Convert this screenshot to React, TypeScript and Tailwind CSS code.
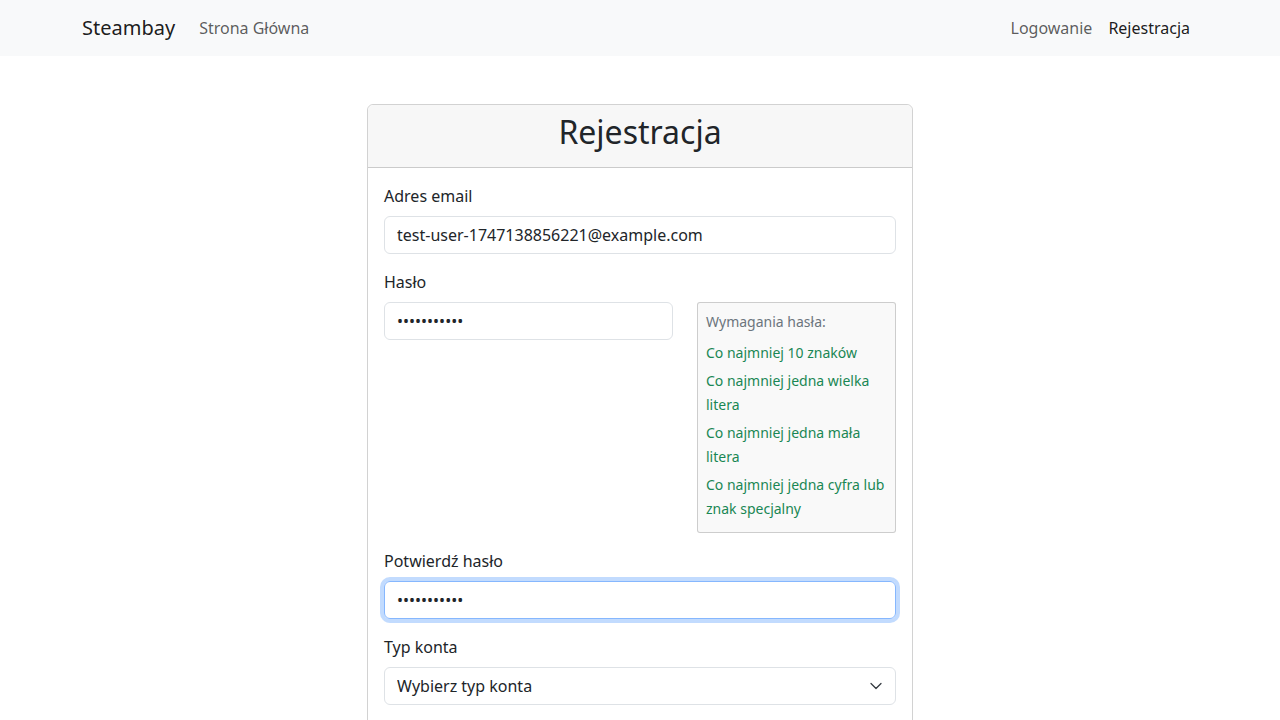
import { useState } from "react";

const requirements = [
  "Co najmniej 10 znaków",
  "Co najmniej jedna wielka litera",
  "Co najmniej jedna mała litera",
  "Co najmniej jedna cyfra lub znak specjalny",
];

export default function App() {
  const [email, setEmail] = useState("test-user-1747138856221@example.com");
  const [password, setPassword] = useState("Password123");
  const [confirm, setConfirm] = useState("Password123");

  return (
    <div
      className="min-h-screen bg-white text-[#212529] text-base leading-6"
      style={{ fontFamily: '"Noto Sans", sans-serif' }}
    >
      <nav className="bg-[#f8f9fa] h-14">
        <div className="mx-auto max-w-[1140px] px-3 h-full flex items-center">
          <a href="#" className="text-xl text-black/90 py-[5px] mr-4">
            Steambay
          </a>
          <a href="#" className="px-2 py-2 text-black/65">
            Strona Główna
          </a>
          <div className="ml-auto flex">
            <a href="#" className="px-2 py-2 text-black/65">
              Logowanie
            </a>
            <a href="#" className="px-2 py-2 text-black/90">
              Rejestracja
            </a>
          </div>
        </div>
      </nav>

      <div className="mx-auto max-w-[1140px] px-3 mt-12">
        <div className="mx-auto w-[546px] border border-black/[0.175] rounded-md">
          <div className="bg-[#f7f7f7] border-b border-black/[0.175] rounded-t-md h-[63px] flex items-center justify-center pb-[7px]">
            <h2 className="text-[32px] leading-[1.2] font-normal">Rejestracja</h2>
          </div>
          <form className="p-4">
            <div className="mb-4">
              <label className="block mb-2">Adres email</label>
              <input
                value={email}
                onChange={(e) => setEmail(e.target.value)}
                className="block w-full h-[38px] px-3 border border-[#dee2e6] rounded-md outline-none"
              />
            </div>

            <div className="mb-4">
              <label className="block mb-2">Hasło</label>
              <div className="flex gap-6">
                <div className="w-[289px] shrink-0">
                  <input
                    type="password"
                    value={password}
                    onChange={(e) => setPassword(e.target.value)}
                    className="block w-full h-[38px] px-3 border border-[#dee2e6] rounded-md outline-none"
                  />
                </div>
                <div className="flex-1 bg-[#f9f9f9] border border-black/[0.175] rounded-[3px] p-2">
                  <p className="text-sm leading-[21px] text-[#6c757d] mb-[9px]">
                    Wymagania hasła:
                  </p>
                  <ul>
                    {requirements.map((r) => (
                      <li
                        key={r}
                        className="text-sm leading-6 text-[#198754] mb-1 last:mb-[3px]"
                      >
                        {r}
                      </li>
                    ))}
                  </ul>
                </div>
              </div>
            </div>

            <div className="mb-4">
              <label className="block mb-2">Potwierdź hasło</label>
              <input
                type="password"
                value={confirm}
                onChange={(e) => setConfirm(e.target.value)}
                className="block w-full h-[38px] px-3 border border-[#86b7fe] rounded-md outline-none shadow-[0_0_0_4px_rgba(13,110,253,0.25)]"
              />
            </div>

            <div className="mb-4">
              <label className="block mb-2">Typ konta</label>
              <div className="relative">
                <select
                  defaultValue=""
                  className="block w-full h-[38px] pl-3 pr-9 border border-[#dee2e6] rounded-md outline-none appearance-none bg-white"
                >
                  <option value="">Wybierz typ konta</option>
                  <option value="buyer">Kupujący</option>
                  <option value="seller">Sprzedający</option>
                </select>
                <svg
                  className="absolute right-[14px] top-1/2 -translate-y-1/2 pointer-events-none"
                  width="12"
                  height="8"
                  viewBox="0 0 12 8"
                  fill="none"
                  stroke="#343a40"
                  strokeWidth="1.25"
                  strokeLinecap="round"
                  strokeLinejoin="round"
                >
                  <path d="M1 1.5l5 5 5-5" />
                </svg>
              </div>
            </div>
          </form>
        </div>
      </div>
    </div>
  );
}
